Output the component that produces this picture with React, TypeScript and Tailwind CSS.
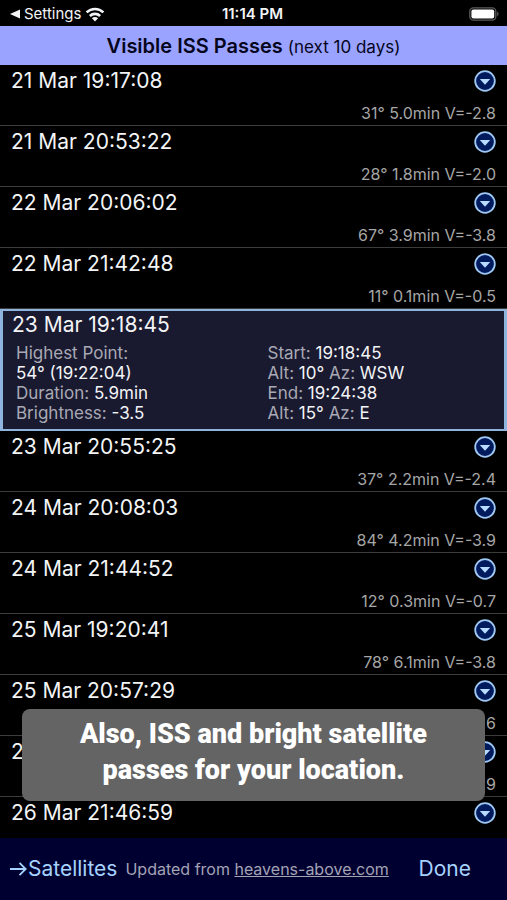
import { useState } from 'react'
import { clsx } from 'clsx'

type Pass = {
  time: string
  summary: string
  details?: {
    highest: string
    duration: string
    brightness: string
    start: string
    startAlt: string
    startAz: string
    end: string
    endAlt: string
    endAz: string
  }
}

const passes: Pass[] = [
  { time: '21 Mar 19:17:08', summary: '31° 5.0min V=-2.8' },
  { time: '21 Mar 20:53:22', summary: '28° 1.8min V=-2.0' },
  { time: '22 Mar 20:06:02', summary: '67° 3.9min V=-3.8' },
  { time: '22 Mar 21:42:48', summary: '11° 0.1min V=-0.5' },
  {
    time: '23 Mar 19:18:45',
    summary: '54° 5.9min V=-3.5',
    details: {
      highest: '54° (19:22:04)',
      duration: '5.9min',
      brightness: '-3.5',
      start: '19:18:45',
      startAlt: '10°',
      startAz: 'WSW',
      end: '19:24:38',
      endAlt: '15°',
      endAz: 'E',
    },
  },
  { time: '23 Mar 20:55:25', summary: '37° 2.2min V=-2.4' },
  { time: '24 Mar 20:08:03', summary: '84° 4.2min V=-3.9' },
  { time: '24 Mar 21:44:52', summary: '12° 0.3min V=-0.7' },
  { time: '25 Mar 19:20:41', summary: '78° 6.1min V=-3.8' },
  { time: '25 Mar 20:57:29', summary: '6' },
  { time: '2', summary: '9' },
  { time: '26 Mar 21:46:59', summary: '' },
]

function StatusBar() {
  return (
    <div className="grid h-[26px] shrink-0 grid-cols-3 items-center pt-0.5 pr-2 pl-1.5 text-[15px] leading-5 text-gray-100">
      <button className="flex items-center gap-1 pl-1">
        <svg viewBox="0 0 10 10" className="h-2.5 w-2.5" fill="currentColor">
          <path d="M0 5 10 0.5v9z" />
        </svg>
        <span>Settings</span>
        <svg viewBox="0 0 20 15" className="h-[15px] w-5" fill="none" stroke="currentColor" strokeWidth="2.6">
          <path d="M1.6 5.4a12 12 0 0 1 16.8 0" />
          <path d="M4.9 9a7.3 7.3 0 0 1 10.2 0" />
          <path d="M10 14.4 6.9 11.3a4.4 4.4 0 0 1 6.2 0z" fill="currentColor" stroke="none" />
        </svg>
      </button>
      <div className="text-center font-semibold">11:14 PM</div>
      <svg viewBox="0 0 30 14" className="h-3.5 w-[30px] justify-self-end">
        <rect x="0.8" y="0.8" width="26" height="12.4" rx="3.6" fill="none" stroke="#5c5c5c" strokeWidth="1.3" />
        <rect x="2.4" y="2.4" width="22.8" height="9.2" rx="2" fill="#fff" />
        <path d="M28.2 4.8c1.8.6 1.8 3.8 0 4.4z" fill="#5c5c5c" />
      </svg>
    </div>
  )
}

function ExpandIcon() {
  return (
    <svg viewBox="0 0 22 22" className="h-[22px] w-[22px]">
      <circle cx="11" cy="11" r="9.8" fill="#001a5e" stroke="#9fc8f4" strokeWidth="1.8" />
      <path d="M5.8 9h10.4L11 14.8z" fill="#b8dcff" />
    </svg>
  )
}

function Label({ children }: { children: string }) {
  return <span className="text-[#a9a9b4]">{children}</span>
}

function PassRow({ pass, open, onToggle }: { pass: Pass; open: boolean; onToggle: () => void }) {
  const d = pass.details

  if (open && d) {
    return (
      <li className="h-[122px] border-x-[3px] border-y-2 border-[#8fb4de] bg-[#191930] px-[9px]">
        <button onClick={onToggle} className="block text-[21px] leading-7 text-gray-100">
          {pass.time}
        </button>
        <div className="grid grid-cols-2 pt-1 pl-1 text-[17px] leading-5 text-gray-100">
          <div>
            <div><Label>Highest Point:</Label></div>
            <div>{d.highest}</div>
            <div><Label>Duration:</Label> {d.duration}</div>
            <div><Label>Brightness:</Label> {d.brightness}</div>
          </div>
          <div className="pl-3">
            <div><Label>Start:</Label> {d.start}</div>
            <div><Label>Alt:</Label> {d.startAlt} <Label>Az:</Label> {d.startAz}</div>
            <div><Label>End:</Label> {d.end}</div>
            <div><Label>Alt:</Label> {d.endAlt} <Label>Az:</Label> {d.endAz}</div>
          </div>
        </div>
      </li>
    )
  }

  return (
    <li className="h-[61px] border-b border-[#3c3c3c] px-[11px]">
      <div className="flex h-8 items-center justify-between">
        <span className="text-[21px] leading-7 text-gray-100">{pass.time}</span>
        <button aria-label="Show pass details" onClick={onToggle}>
          <ExpandIcon />
        </button>
      </div>
      <div className="pt-1.5 text-right text-base leading-5 text-[#a6a6a6]">{pass.summary}</div>
    </li>
  )
}

export default function App() {
  const [openIndex, setOpenIndex] = useState<number | null>(4)

  return (
    <div className={clsx('relative flex h-screen flex-col bg-black', "font-['Inter','Liberation_Sans',sans-serif]")}>
      <StatusBar />
      <header className="flex h-[39px] shrink-0 items-center justify-center bg-[#9aa3ff] text-[#05051c]">
        <h1 className="text-xl font-semibold">
          Visible ISS Passes <span className="text-[17px] font-normal">(next 10 days)</span>
        </h1>
      </header>

      <ul className="min-h-0 flex-1 overflow-hidden">
        {passes.map((pass, i) => (
          <PassRow
            key={i}
            pass={pass}
            open={openIndex === i}
            onToggle={() => setOpenIndex(openIndex === i ? null : i)}
          />
        ))}
      </ul>

      <footer className="flex h-[62px] shrink-0 items-center bg-[#000030] pr-9 pl-2.5">
        <button className="flex items-center text-[21px] text-[#a6d2ff]">
          <svg viewBox="0 0 18 16" className="h-4 w-[18px]" fill="none" stroke="currentColor" strokeWidth="1.8">
            <path d="M0 8h15.5M9.5 1.8 15.7 8l-6.2 6.2" />
          </svg>
          Satellites
        </button>
        <p className="ml-2 text-base text-[#a3a3b5]">
          Updated from <a href="https://heavens-above.com" className="underline">heavens-above.com</a>
        </p>
        <button className="ml-auto text-[21px] text-[#a6d2ff]">Done</button>
      </footer>

      <div className="absolute inset-x-[22px] bottom-[99px] flex h-[92px] items-center justify-center rounded-lg bg-[#646464] pb-1.5 text-center font-['Roboto','Liberation_Sans',sans-serif] text-[27px] leading-9 font-black text-white">
        <p>
          Also, ISS and bright satellite
          <br />
          passes for your location.
        </p>
      </div>
    </div>
  )
}
